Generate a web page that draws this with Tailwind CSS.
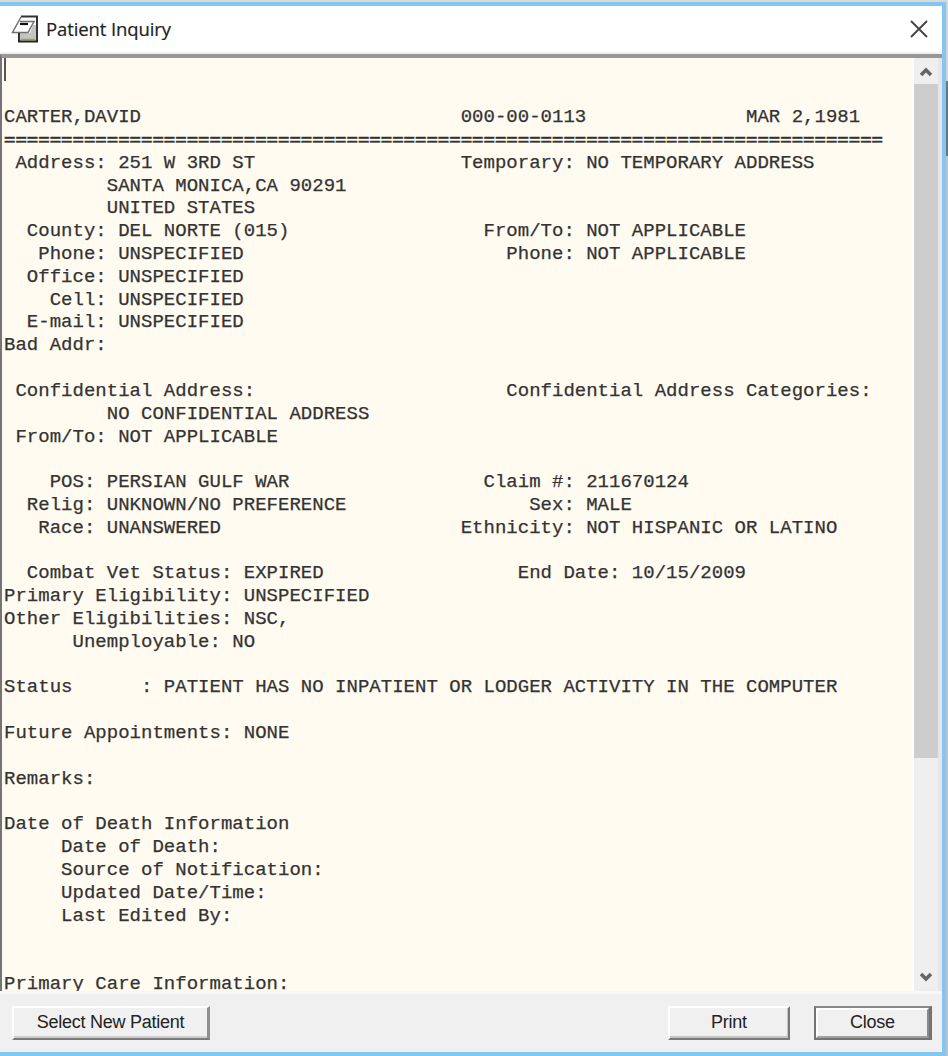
<!DOCTYPE html>
<html lang="en"><head><meta charset="utf-8"><title>Patient Inquiry</title>
<script src="https://cdn.jsdelivr.net/npm/@tailwindcss/browser@4"></script></head>
<body class="w-[948px] h-[1056px] overflow-hidden bg-[#d9d9d9]">
<div class="relative flex h-full w-full pt-[2px]">
<div class="flex h-[1054px] w-[946px] flex-col border-t-4 border-r-4 border-b-4 border-[#82c7f2] bg-[#f0f0f0]">
  <header class="flex h-[46px] shrink-0 items-center bg-white pl-[11px] pr-[14px]">
    <svg class="h-[28px] w-[28px] shrink-0" viewBox="0 0 28 28" fill="none">
      <path d="M19 10h7v17H7v-9h9z" fill="#c4c4c4"/>
      <path d="M11 2h14l-6 16H2z" fill="#fff"/>
      <path d="M10 1.5h16V27" stroke="#333" stroke-width="2"/>
      <path d="M10 2L1.500 17.500h15.500l6-11h-14" stroke="#707070" stroke-width="1.5"/>
      <path d="M9 9h8" stroke="#111" stroke-width="2.2"/>
      <path d="M8 18v8" stroke="#333" stroke-width="2"/>
      <path d="M7 26.500h20" stroke="#222" stroke-width="2"/>
      <path d="M10 24.500h14" stroke="#a5a530" stroke-width="1.5"/>
    </svg>
    <h1 class="ml-[7px] whitespace-nowrap font-['Open_Sans',sans-serif] text-[18.5px] tracking-[-0.1px] text-[#222] [-webkit-text-stroke:0.2px_#222]">Patient Inquiry</h1>
    <svg class="ml-auto mt-[-1px] h-[18px] w-[18px]" viewBox="0 0 18 18"><path d="M1 1l16 16M17 1L1 17" stroke="#444" stroke-width="1.9"/></svg>
  </header>
  <div class="h-[2px] shrink-0 bg-[#f0f0f0]"></div>
  <main class="flex h-[937px] shrink-0 border-t-[4px] border-l-2 border-t-[#979795] border-l-[#747476] bg-[#fffbf0]">
    <div class="relative w-[910px] shrink-0 overflow-hidden">
      <div class="absolute left-[2px] top-0 h-[23px] w-[2px] bg-[#555]"></div>
<pre class="pl-[2px] pt-[2.500px] font-['Liberation_Mono','Courier_New',monospace] text-[19px] leading-[22.816px] tracking-[0.014px] text-[#333] [-webkit-text-stroke:0.25px_#333]">
&#8203;

CARTER,DAVID                            000-00-0113              MAR 2,1981
<span class="relative top-px inline-block h-[22.816px] scale-y-[0.75] align-top font-bold [-webkit-text-stroke:0.6px_#333]">=============================================================================</span>
 Address: 251 W 3RD ST                  Temporary: NO TEMPORARY ADDRESS
         SANTA MONICA,CA 90291
         UNITED STATES
  County: DEL NORTE (015)                 From/To: NOT APPLICABLE
   Phone: UNSPECIFIED                       Phone: NOT APPLICABLE
  Office: UNSPECIFIED
    Cell: UNSPECIFIED
  E-mail: UNSPECIFIED
Bad Addr:

 Confidential Address:                      Confidential Address Categories:
         NO CONFIDENTIAL ADDRESS
 From/To: NOT APPLICABLE

    POS: PERSIAN GULF WAR                 Claim #: 211670124
  Relig: UNKNOWN/NO PREFERENCE                Sex: MALE
   Race: UNANSWERED                     Ethnicity: NOT HISPANIC OR LATINO

  Combat Vet Status: EXPIRED                 End Date: 10/15/2009
Primary Eligibility: UNSPECIFIED
Other Eligibilities: NSC,
      Unemployable: NO

Status      : PATIENT HAS NO INPATIENT OR LODGER ACTIVITY IN THE COMPUTER

Future Appointments: NONE

Remarks:

Date of Death Information
     Date of Death:
     Source of Notification:
     Updated Date/Time:
     Last Edited By:


Primary Care Information:
</pre>
    </div>
    <div class="w-[2px] shrink-0 bg-[#fffefb]"></div>
    <div class="flex w-[24px] shrink-0 flex-col items-center bg-[#efefef]">
      <svg class="h-[26px] w-[24px] shrink-0" viewBox="0 0 24 26"><path d="M7 17l5-5 5 5" fill="none" stroke="#666" stroke-width="3.5"/></svg>
      <div class="h-[674px] w-[24px] bg-[#cdcdcd]"></div>
      <svg class="mt-auto h-[27px] w-[24px] shrink-0" viewBox="0 0 24 27"><path d="M7 10l5 5 5-5" fill="none" stroke="#666" stroke-width="3.5"/></svg>
    </div>
    <div class="grow bg-[#e6e6e6]"></div>
  </main>
  <div class="h-[3px] shrink-0 bg-[#f7f7f7]"></div>
  <footer class="flex pl-[12px] pt-[12px] font-['Liberation_Sans',Arial,sans-serif] text-[18px] tracking-[-0.25px] text-[#222]">
    <button class="h-[34px] w-[198px] border-t-2 border-l-2 border-r-[3px] border-b-[2px] border-t-white border-l-white border-r-[#8f8f8f] border-b-[#7a7a7a] pb-px shadow-[inset_0_-2px_0_#cfcfcf]">Select New Patient</button>
    <button class="ml-[458px] h-[34px] w-[122px] border-t-2 border-l-2 border-r-[2px] border-b-[2px] border-t-white border-l-white border-r-[#777] border-b-[#7a7a7a] pb-px shadow-[inset_-1px_-2px_0_#c4c4c4]">Print</button>
    <div class="ml-[24px] h-[34px] w-[118px] border-2 border-r-[3px] border-[#737373] border-t-[#888]"><button class="h-full w-full border-2 border-t-white border-l-white border-r-[#8a8a8a] border-b-[#a0a0a0] pb-[2px] leading-none">Close</button></div>
  </footer>
</div>
<div class="flex w-[2px] flex-col"><div class="h-[79px] bg-[#d4d4d4]"></div><div class="h-[75px] bg-[#707478]"></div><div class="grow bg-[#bcc4ca]"></div></div>
</div>
</body></html>
